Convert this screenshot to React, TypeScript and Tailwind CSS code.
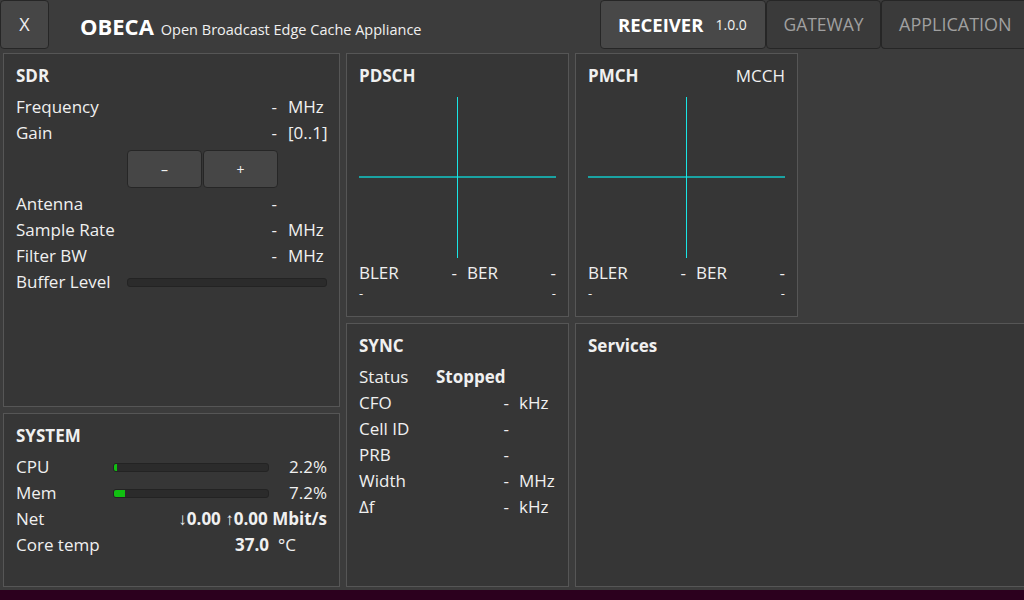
import React from "react";

const font = { fontFamily: '"Open Sans", "Noto Sans", sans-serif' };

function Panel({ className, children }: { className?: string; children?: React.ReactNode }) {
  return (
    <div className={"bg-[#363636] border border-[#565656] " + (className ?? "")}>{children}</div>
  );
}

function SdrRow({ label, value, unit }: { label: string; value: string; unit: string }) {
  return (
    <div className="flex items-center h-[26px]">
      <div className="flex-1">{label}</div>
      <div className="text-right">{value}</div>
      <div className="w-[50px] pl-[11px] whitespace-nowrap">{unit}</div>
    </div>
  );
}

function SyncRow({ label, value, unit }: { label: string; value: string; unit?: string }) {
  return (
    <div className="flex items-center h-[26px]">
      <div className="w-[77px]">{label}</div>
      <div className="w-[73px] text-right">{value}</div>
      <div className="pl-[10px]">{unit ?? ""}</div>
    </div>
  );
}

function Chart() {
  return (
    <svg width="197" height="161" className="block mt-[8px]">
      <line x1="0" y1="80" x2="197" y2="80" stroke="#1aa3a3" strokeWidth="2" />
      <line x1="98.5" y1="0" x2="98.5" y2="161" stroke="#19e6e6" strokeWidth="1" />
    </svg>
  );
}

function ErrRows() {
  return (
    <div>
      <div className="flex items-center h-[26px] mt-[2px]">
        <div className="w-[98px] flex justify-between">
          <span>BLER</span>
          <span>-</span>
        </div>
        <div className="flex-1 flex justify-between pl-[10px]">
          <span>BER</span>
          <span>-</span>
        </div>
      </div>
      <div className="flex justify-between items-center h-[16px] text-[13px]">
        <span>-</span>
        <span>-</span>
      </div>
    </div>
  );
}

function Bar({ pct }: { pct: number }) {
  return (
    <div className="w-[156px] h-[9px] rounded-[3px] bg-[#2b2b2b] border border-[#232323] overflow-hidden">
      <div className="h-full bg-[#11c011]" style={{ width: `${pct}%` }} />
    </div>
  );
}

export default function App() {
  return (
    <div className="w-[1024px] h-[600px] bg-[#2c001e] overflow-hidden text-[#f0f0f0] text-[17px]" style={font}>
      <div className="h-[590px] bg-[#3c3c3c] flex flex-col">
        {/* Top bar */}
        <div className="h-[50px] flex items-stretch">
          <button className="w-[49px] h-[49px] bg-[#464646] border border-[#262626] rounded-[4px] text-[18px] text-[#f0f0f0] flex items-center justify-center">
            X
          </button>
          <div className="flex items-baseline pl-[31px] pt-[10px]">
            <span className="text-[22px] font-bold text-white">OBECA</span>
            <span className="text-[14.5px] ml-[7px] text-[#f0f0f0]">Open Broadcast Edge Cache Appliance</span>
          </div>
          <div className="flex-1" />
          <div className="flex h-[49px]">
            <div className="w-[166px] bg-[#484848] border border-[#262626] rounded-[4px] flex items-center pl-[17px]">
              <span className="text-[18.5px] font-bold text-white">RECEIVER</span>
              <span className="text-[14px] ml-[12px] text-[#f0f0f0]">1.0.0</span>
            </div>
            <div className="w-[115px] bg-[#3a3a3a] border border-[#262626] rounded-[4px] flex items-center justify-center text-[17.5px] text-[#a0a0a0]">
              GATEWAY
            </div>
            <div className="w-[143px] bg-[#3a3a3a] border border-[#262626] rounded-l-[4px] border-r-0 flex items-center pl-[17px] text-[18px] text-[#a0a0a0]">
              APPLICATION
            </div>
          </div>
        </div>

        {/* Main grid */}
        <div className="grid grid-cols-[337px_223px_223px_1fr] grid-rows-[264px_264px] gap-x-[6px] gap-y-[6px] pl-[3px] pt-[3px] h-[537px]">
          {/* Column 1 */}
          <div className="row-span-2 flex flex-col gap-[6px]">
            <Panel className="h-[354px] px-[12px] pt-[9px]">
              <div className="h-[26px] flex items-center font-bold">SDR</div>
              <div className="mt-[5px]">
                <SdrRow label="Frequency" value="-" unit="MHz" />
                <SdrRow label="Gain" value="-" unit="[0..1]" />
                <div className="flex pl-[111px] mt-[4px] gap-[1px]">
                  <button className="w-[75px] h-[38px] bg-[#464646] border border-[#262626] rounded-[4px] text-[14px]">
                    –
                  </button>
                  <button className="w-[75px] h-[38px] bg-[#464646] border border-[#262626] rounded-[4px] text-[14px]">
                    +
                  </button>
                </div>
                <div className="mt-[3px]">
                  <SdrRow label="Antenna" value="-" unit="" />
                  <SdrRow label="Sample Rate" value="-" unit="MHz" />
                  <SdrRow label="Filter BW" value="-" unit="MHz" />
                  <div className="flex items-center h-[26px]">
                    <div className="w-[111px] whitespace-nowrap">Buffer Level</div>
                    <div className="flex-1 h-[9px] rounded-[3px] bg-[#2b2b2b] border border-[#232323]" />
                  </div>
                </div>
              </div>
            </Panel>
            <Panel className="flex-1 px-[12px] pt-[9px]">
              <div className="h-[26px] flex items-center font-bold">SYSTEM</div>
              <div className="mt-[5px]">
                <div className="flex items-center h-[26px]">
                  <div className="w-[97px]">CPU</div>
                  <Bar pct={2.2} />
                  <div className="flex-1 text-right">2.2%</div>
                </div>
                <div className="flex items-center h-[26px]">
                  <div className="w-[97px]">Mem</div>
                  <Bar pct={7.2} />
                  <div className="flex-1 text-right">7.2%</div>
                </div>
                <div className="flex items-center h-[26px]">
                  <div className="w-[97px]">Net</div>
                  <div className="flex-1 text-right font-bold whitespace-nowrap">↓0.00 ↑0.00 Mbit/s</div>
                </div>
                <div className="flex items-center h-[26px]">
                  <div className="w-[97px] whitespace-nowrap">Core temp</div>
                  <div className="w-[156px] text-right font-bold">37.0</div>
                  <div className="pl-[9px]">°C</div>
                </div>
              </div>
            </Panel>
          </div>

          {/* PDSCH */}
          <Panel className="px-[12px] pt-[9px]">
            <div className="h-[26px] flex items-center font-bold">PDSCH</div>
            <Chart />
            <ErrRows />
          </Panel>

          {/* PMCH */}
          <Panel className="px-[12px] pt-[9px]">
            <div className="h-[26px] flex items-center justify-between">
              <span className="font-bold">PMCH</span>
              <span>MCCH</span>
            </div>
            <Chart />
            <ErrRows />
          </Panel>

          <div />

          {/* SYNC */}
          <Panel className="px-[12px] pt-[9px]">
            <div className="h-[26px] flex items-center font-bold">SYNC</div>
            <div className="mt-[5px]">
              <div className="flex items-center h-[26px]">
                <div className="w-[77px]">Status</div>
                <div className="font-bold">Stopped</div>
              </div>
              <SyncRow label="CFO" value="-" unit="kHz" />
              <SyncRow label="Cell ID" value="-" />
              <SyncRow label="PRB" value="-" />
              <SyncRow label="Width" value="-" unit="MHz" />
              <SyncRow label="Δf" value="-" unit="kHz" />
            </div>
          </Panel>

          {/* Services */}
          <Panel className="col-span-2 border-r-0 px-[12px] pt-[9px]">
            <div className="h-[26px] flex items-center font-bold">Services</div>
          </Panel>
        </div>
      </div>
    </div>
  );
}
